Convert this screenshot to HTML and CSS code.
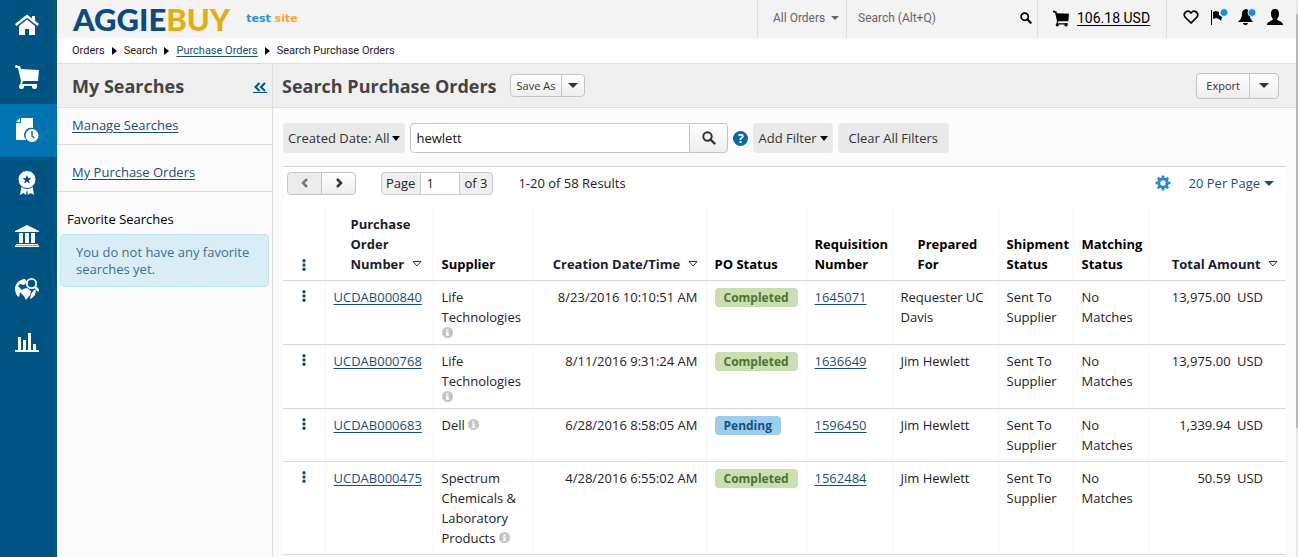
FILE: index.html
```
<!DOCTYPE html>
<html lang="en">
<head>
  <meta charset="UTF-8" />
  <meta name="viewport" content="width=device-width, initial-scale=1" />
  <title>Search Purchase Orders</title>
  <link rel="stylesheet" href="styles.css">
</head>
<body>

<svg class="defs" width="0" height="0" aria-hidden="true">
  <symbol id="cart" viewBox="0 0 24 24">
    <circle cx="1.500" cy="1.500" r="1.500"/>
    <path d="M1 1h4l1 3 18 1-1 11H8l-1 3h15v2H5l1-5L3 3H1z"/>
    <circle cx="6.500" cy="21.500" r="2.500"/><circle cx="19.500" cy="21.500" r="2.500"/>
  </symbol>
  <symbol id="lens" viewBox="0 0 14 14">
    <circle cx="5.500" cy="5.500" r="4.200" fill="none" stroke="currentColor" stroke-width="2"/>
    <path d="M8.500 8.500l4 4" stroke="currentColor" stroke-width="2.400" stroke-linecap="round"/>
  </symbol>
  <symbol id="dots" viewBox="0 0 4 12">
    <circle cx="2" cy="1.700" r="1.700"/><circle cx="2" cy="6" r="1.700"/><circle cx="2" cy="10.300" r="1.700"/>
  </symbol>
  <symbol id="info" viewBox="0 0 10 10">
    <circle cx="5" cy="5" r="5"/>
    <path d="M4 2h2v1.400H4zM3.500 4.200H6V7h.7v1H3.400V7H4V5.200h-.5z" fill="#fff"/>
  </symbol>
  <symbol id="sort" viewBox="0 0 10 6">
    <path d="M1 .5h8L5 5z" fill="#fff" stroke="#333"/>
  </symbol>
</svg>

<nav class="rail" aria-label="Main">
  <a href="#" title="Home">
    <svg viewBox="0 0 24 24"><path d="M12 1.500L0 11l1.500 2L12 4.800 22.500 13l1.500-2-4-3.200V3h-3v2.400z"/><path d="M12 6.500L4 13v9h6v-6h4v6h6v-9z"/></svg>
  </a>
  <a href="#" title="Shop"><svg viewBox="0 0 24 24"><use href="#cart"/></svg></a>
  <a href="#" title="Orders" class="active">
    <svg viewBox="0 0 24 24"><path d="M6 0h12v10a7 7 0 0 0-6.500 12H1V5h5z"/><path d="M5 0v4H1z"/><circle cx="17" cy="17.500" r="6.500"/><path d="M17 13v5l2.500 2" fill="none" stroke="#0073b1" stroke-width="1.500"/></svg>
  </a>
  <a href="#" title="Contracts">
    <svg viewBox="0 0 24 24"><path d="M6.500 15L5 24l3.500-2L11 24l1-6 1 6 2.500-2L19 24l-1.500-9z"/><circle cx="12" cy="8.500" r="9" stroke="#005482"/><path d="M12 4l1.200 3.100 3.300.2-2.600 2 .9 3.200L12 10.700l-2.800 1.800.9-3.200-2.600-2 3.300-.2z" fill="#005482"/></svg>
  </a>
  <a href="#" title="Accounts">
    <svg viewBox="0 0 24 24"><path d="M12 1L0 7v1h24V7zM1 20h22v1H1zM0 21.500h24V23H0zM4 9h4v10H4zM10 9h4v10h-4zM16 9h4v10h-4z"/></svg>
  </a>
  <a href="#" title="Sourcing">
    <svg viewBox="0 0 24 24"><path d="M9 2C4 3 0 7 0 12c0 4 2 7 4 8l1-4 3-2-3-3-2-2 2-2 4 1 3-3-2-3z"/><path d="M8 12l4-1 4 3-1 4-4 5-2-4-3-3z"/><path d="M19 13h2l-1 5-3 3-2 1 1-5z"/><circle cx="16.500" cy="6.500" r="4.700" fill="#005482" stroke="#fff" stroke-width="1.800"/><path d="M20 10l4 4" stroke="#fff" stroke-width="2.500"/></svg>
  </a>
  <a href="#" title="Reporting">
    <svg viewBox="0 0 24 24"><path d="M0 20h24v2H0zM3 7h3v13H3zM8 10h3v10H8zM13 3h3v17h-3zM18 14h3v6h-3z"/></svg>
  </a>
</nav>

<div class="page">
  <header class="topbar">
    <a href="#" class="logo">AGGIE<span>BUY</span></a>
    <p class="site-tag">test <span>site</span></p>
    <div class="quick-search">
      <button type="button" class="scope">All Orders <i class="caret"></i></button>
      <div class="quick-input">
        <input type="text" placeholder="Search (Alt+Q)" aria-label="Search (Alt+Q)" />
        <button type="button" class="plain" title="Search"><svg width="12" height="12"><use href="#lens"/></svg></button>
      </div>
      <a href="#" class="cart-total"><svg width="16" height="17"><use href="#cart"/></svg><span>106.18 USD</span></a>
      <div class="user-icons">
        <button type="button" class="plain" title="Bookmarks"><svg width="16" height="16" viewBox="0 0 16 16"><path d="M8 14L2 8C-.5 4 4.500 0 8 4c3.500-4 8.500 0 6 4z" fill="none" stroke="#000" stroke-width="1.700"/></svg></button>
        <button type="button" class="plain" title="Action items"><svg width="18" height="18" viewBox="0 0 18 18"><path d="M1 2h1v15H1zM3 4l3-1 3 1 0 3 3 2-1 4-2-2-3-1-3 1z"/><circle cx="14" cy="4.500" r="4" fill="#0f93da" stroke="#f3f3f3"/></svg></button>
        <button type="button" class="plain" title="Notifications"><svg width="18" height="18" viewBox="0 0 18 18"><path d="M8 1c4 1 5 3 4 8 0 2 2 3 3 5H0c2-2 4-4 4-8 0-3 1-4 4-5zM5 15h5c-1 3-4 3-5 0z"/><circle cx="14" cy="4.500" r="4" fill="#0f93da" stroke="#f3f3f3"/></svg></button>
        <button type="button" class="plain" title="Profile"><svg width="16" height="18" viewBox="0 0 16 18"><path d="M8 1c3 0 4 2 4 5 0 2-1 4-2 5 0 2 6 2 6 6H0c0-4 6-4 6-6-1-1-2-3-2-5 0-3 1-5 4-5z"/></svg></button>
      </div>
    </div>
  </header>

  <nav class="breadcrumb" aria-label="Breadcrumb">
    <span>Orders</span><i></i><span>Search</span><i></i><a href="#">Purchase Orders</a><i></i><span>Search Purchase Orders</span>
  </nav>

  <div class="columns">
    <aside class="sidebar">
      <div class="title-bar">
        <h2>My Searches</h2>
        <a href="#" class="collapse" title="Collapse"><svg width="12" height="10" viewBox="0 0 12 10"><path d="M5.500 1l-4 4 4 4M11 1L7 5l4 4" fill="none" stroke="#00548a" stroke-width="2"/></svg></a>
      </div>
      <div class="side-link first"><a href="#">Manage Searches</a></div>
      <div class="side-link"><a href="#">My Purchase Orders</a></div>
      <h3>Favorite Searches</h3>
      <p class="notice">You do not have any favorite searches yet.</p>
    </aside>

    <main>
      <div class="title-bar">
        <h1>Search Purchase Orders</h1>
        <div class="split small"><button type="button">Save As</button><button type="button" title="More save options"><i class="caret"></i></button></div>
        <div class="split export"><button type="button">Export</button><button type="button" title="More export options"><i class="caret"></i></button></div>
      </div>

      <div class="filters">
        <button type="button" class="filter">Created Date: All <i class="caret"></i></button>
        <div class="keyword">
          <input type="text" value="hewlett" aria-label="Keyword" />
          <button type="button" title="Search"><svg width="14" height="14"><use href="#lens"/></svg></button>
        </div>
        <button type="button" class="help" title="Help">?</button>
        <button type="button" class="filter">Add Filter <i class="caret"></i></button>
        <button type="button" class="filter clear">Clear All Filters</button>
      </div>

      <section class="results">
        <div class="pager">
          <div class="split arrows">
            <button type="button" title="Previous page" disabled><svg width="8" height="10" viewBox="0 0 8 10"><path d="M6 1L2 5l4 4" fill="none" stroke="currentColor" stroke-width="2.500"/></svg></button>
            <button type="button" title="Next page"><svg width="8" height="10" viewBox="0 0 8 10"><path d="M2 1l4 4-4 4" fill="none" stroke="currentColor" stroke-width="2.500"/></svg></button>
          </div>
          <div class="page-box">
            <label for="page-number">Page</label><input type="text" id="page-number" value="1" /><span>of 3</span>
          </div>
          <span>1-20 of 58 Results</span>
          <button type="button" class="plain gear" title="Configure columns"><svg width="16" height="16" viewBox="-8 -8 16 16"><circle r="4.200" fill="none" stroke="currentColor" stroke-width="3"/><path d="M0-7.500v3M0 7.500v-3M-7.500 0h3M7.500 0h-3M-5.300-5.300l2 2M5.300 5.300l-2-2M-5.300 5.300l2-2M5.300-5.300l-2 2" stroke="currentColor" stroke-width="2.500"/></svg></button>
          <button type="button" class="plain per-page">20 Per Page <i class="caret"></i></button>
        </div>

        <table>
          <colgroup>
            <col class="c-menu"><col class="c-po"><col class="c-supplier"><col class="c-date"><col class="c-status">
            <col class="c-req"><col class="c-for"><col class="c-ship"><col class="c-match"><col class="c-total">
          </colgroup>
          <thead>
            <tr>
              <th class="menu"><button type="button" class="plain" title="Actions"><svg width="4" height="12"><use href="#dots"/></svg></button></th>
              <th class="indent sortable">Purchase Order Number <svg class="sort"><use href="#sort"/></svg></th>
              <th>Supplier</th>
              <th class="num sortable">Creation Date/Time <svg class="sort"><use href="#sort"/></svg></th>
              <th>PO Status</th>
              <th>Requisition Number</th>
              <th class="indent">Prepared For</th>
              <th>Shipment Status</th>
              <th>Matching Status</th>
              <th class="num sortable">Total Amount <svg class="sort"><use href="#sort"/></svg></th>
            </tr>
          </thead>
          <tbody>
            <tr>
              <td class="menu"><button type="button" class="plain" title="Actions"><svg width="4" height="12"><use href="#dots"/></svg></button></td>
              <td><a href="#">UCDAB000840</a></td>
              <td>Life Technologies <svg class="info below"><use href="#info"/></svg></td>
              <td class="num">8/23/2016 10:10:51 AM</td>
              <td><span class="badge done">Completed</span></td>
              <td><a href="#">1645071</a></td>
              <td>Requester UC Davis</td>
              <td>Sent To Supplier</td>
              <td>No Matches</td>
              <td class="num total">13,975.00 <span>USD</span></td>
            </tr>
            <tr>
              <td class="menu"><button type="button" class="plain" title="Actions"><svg width="4" height="12"><use href="#dots"/></svg></button></td>
              <td><a href="#">UCDAB000768</a></td>
              <td>Life Technologies <svg class="info below"><use href="#info"/></svg></td>
              <td class="num">8/11/2016 9:31:24 AM</td>
              <td><span class="badge done">Completed</span></td>
              <td><a href="#">1636649</a></td>
              <td>Jim Hewlett</td>
              <td>Sent To Supplier</td>
              <td>No Matches</td>
              <td class="num total">13,975.00 <span>USD</span></td>
            </tr>
            <tr>
              <td class="menu"><button type="button" class="plain" title="Actions"><svg width="4" height="12"><use href="#dots"/></svg></button></td>
              <td><a href="#">UCDAB000683</a></td>
              <td>Dell <svg class="info"><use href="#info"/></svg></td>
              <td class="num">6/28/2016 8:58:05 AM</td>
              <td><span class="badge pending">Pending</span></td>
              <td><a href="#">1596450</a></td>
              <td>Jim Hewlett</td>
              <td>Sent To Supplier</td>
              <td>No Matches</td>
              <td class="num total">1,339.94 <span>USD</span></td>
            </tr>
            <tr>
              <td class="menu"><button type="button" class="plain" title="Actions"><svg width="4" height="12"><use href="#dots"/></svg></button></td>
              <td><a href="#">UCDAB000475</a></td>
              <td>Spectrum Chemicals &amp; Laboratory Products <svg class="info"><use href="#info"/></svg></td>
              <td class="num">4/28/2016 6:55:02 AM</td>
              <td><span class="badge done">Completed</span></td>
              <td><a href="#">1562484</a></td>
              <td>Jim Hewlett</td>
              <td>Sent To Supplier</td>
              <td>No Matches</td>
              <td class="num total">50.59 <span>USD</span></td>
            </tr>
          </tbody>
        </table>
      </section>
    </main>
  </div>
</div>

<div class="scroll-thumb"></div>

</body>
</html>
```
FILE: styles.css
```
* {
  box-sizing: border-box;
}
body {
  margin: 0;
  display: flex;
  min-height: 100vh;
  font: 13px/20px "Open Sans", "Noto Sans", sans-serif;
  color: #222;
  background-color: #fbfbfb;
}
h1, h2, h3, p {
  margin: 0;
}
a {
  color: #1b4f72;
  text-decoration: underline;
  text-underline-offset: 2px;
}
button, input {
  font: inherit;
  color: inherit;
  margin: 0;
}
button {
  cursor: pointer;
}
svg {
  fill: currentColor;
  flex: none;
}
.defs {
  position: absolute;
}
.plain {
  display: flex;
  align-items: center;
  padding: 0;
  border: 0;
  background: none;
}
.caret {
  display: inline-block;
  flex: none;
  border: 5px solid transparent;
  border-top-color: currentColor;
  border-bottom-width: 0;
}

/* left icon rail */
.rail {
  flex: 0 0 57px;
  background-color: #005482;
}
.rail a {
  display: flex;
  align-items: center;
  justify-content: center;
  height: 53px;
  padding: 0 3px 2px 0;
  color: #fff;
}
.rail a:first-child {
  height: 51px;
}
.rail a.active {
  background-color: #0073b1;
}
.rail svg {
  width: 24px;
  height: 24px;
}

.page {
  flex: 1;
  min-width: 0;
  display: flex;
  flex-direction: column;
}

/* top bar */
.topbar {
  display: flex;
  align-items: center;
  height: 38px;
  padding-left: 16px;
  background-color: #f3f3f3;
  font-family: Roboto, sans-serif;
}
.logo {
  font: 900 31px/36px Lato, sans-serif;
  color: #0b4a82;
  text-decoration: none;
}
.logo span {
  color: #e0b010;
}
.site-tag {
  margin-left: 16px;
  font: bold 11px/38px "DejaVu Sans", sans-serif;
  color: #1f95d8;
}
.site-tag span {
  color: #f5a623;
}
.quick-search {
  display: flex;
  align-self: stretch;
  margin-left: auto;
  color: #666;
  font-size: 12px;
}
.quick-search > * {
  display: flex;
  align-items: center;
  border: 0;
  border-left: 1px solid #ddd;
  padding-bottom: 2px;
}
.scope {
  width: 89px;
  padding: 0 0 2px 15px;
  gap: 6px;
  background: none;
}
.scope .caret {
  border-width: 4px 4px 0;
}
.quick-input {
  width: 191px;
  padding-left: 11px;
  padding-right: 5px;
  color: #000;
}
.quick-input input {
  flex: 1;
  min-width: 0;
  padding: 0;
  border: 0;
  background: none;
}
.quick-input input::placeholder {
  color: #666;
  opacity: 1;
}
.cart-total {
  width: 129px;
  padding-left: 15px;
  gap: 8px;
  color: #000;
  font-size: 14px;
}
.user-icons {
  width: 132px;
  padding: 0 15px 4px 16px;
  justify-content: space-between;
  color: #000;
}

.breadcrumb {
  display: flex;
  align-items: center;
  height: 25px;
  padding-left: 15px;
  background-color: #fff;
  font: 11px/16px Roboto, sans-serif;
}
.breadcrumb i {
  margin: 0 7px;
  border: 4px solid transparent;
  border-left: 5px solid #000;
  border-right: 0;
}

/* two columns under the breadcrumb */
.columns {
  flex: 1;
  display: flex;
}
.title-bar {
  display: flex;
  align-items: center;
  height: 45px;
  background-color: #efefef;
  border: 1px solid #ddd;
  border-width: 1px 0;
}
h1, h2 {
  font-size: 18px;
  line-height: 24px;
  color: #444;
}
.sidebar {
  flex: 0 0 216px;
  border-right: 1px solid #ddd;
}
.sidebar .title-bar {
  padding: 0 5px 0 15px;
}
.collapse {
  margin-left: auto;
  padding: 4px 1px 0;
  border-bottom: 1px solid #00548a;
  line-height: 10px;
}
.side-link {
  padding: 17px 15px 9px;
  border-bottom: 1px solid #ddd;
}
.side-link.first {
  padding-top: 7px;
}
h3 {
  margin: 17px 0 5px 10px;
  font-size: 13px;
  line-height: 20px;
  font-weight: normal;
  color: #000;
}
.notice {
  margin: 0 3px;
  padding: 9px 15px 8px;
  border: 1px solid #bce8f1;
  border-radius: 4px;
  background-color: #d9edf7;
  color: #3a7090;
  line-height: 17px;
}

main {
  flex: 1;
  min-width: 0;
}
main .title-bar {
  padding: 0 19px 0 9px;
}
.split {
  display: flex;
}
.split button {
  display: flex;
  align-items: center;
  justify-content: center;
  padding: 0 9px;
  height: 26px;
  border: 1px solid #c4c4c4;
  background: linear-gradient(#fff, #ededed);
  font-size: 11px;
  color: #333;
}
.split button:first-child {
  border-radius: 4px 0 0 4px;
}
.split button:last-child {
  border-radius: 0 4px 4px 0;
  margin-left: -1px;
}
.small {
  margin-left: 13px;
}
.small button {
  height: 23px;
  padding: 0 6px;
}
.export {
  margin-left: auto;
}

.filters {
  display: flex;
  align-items: center;
  padding: 15px 10px 13px;
  color: #333;
}
.filter {
  display: flex;
  align-items: center;
  gap: 3px;
  height: 30px;
  padding: 0 5px;
  border: 0;
  border-radius: 4px;
  background-color: #e9e9e9;
}
.filter .caret {
  border-width: 5px 4px 0;
  color: #000;
}
.clear {
  margin-left: 5px;
  padding: 0 11px;
}
.keyword {
  display: flex;
  flex: 0 1 318px;
  height: 30px;
  margin-left: 5px;
}
.keyword input {
  flex: 1;
  min-width: 0;
  padding: 0 5px;
  border: 1px solid #c4c4c4;
  border-radius: 4px 0 0 4px;
  background-color: #fff;
  color: #111;
}
.keyword button {
  display: flex;
  align-items: center;
  justify-content: center;
  width: 39px;
  margin-left: -1px;
  padding: 0;
  border: 1px solid #c4c4c4;
  border-radius: 0 4px 4px 0;
  background: linear-gradient(#fff, #ededed);
}
.help {
  width: 15px;
  height: 15px;
  margin: 0 5px;
  padding: 0;
  border: 0;
  border-radius: 50%;
  background-color: #0b69a8;
  color: #fff;
  font-weight: bold;
  font-size: 12px;
  line-height: 15px;
}

/* results */
.results {
  margin: 0 12px 0 10px;
  border-top: 1px solid #d5d5d5;
  background-color: #fff;
}
.pager {
  display: flex;
  align-items: center;
  height: 41px;
  padding: 0 12px 9px 4px;
}
.arrows button {
  width: 35px;
  height: 23px;
}
.arrows button:disabled {
  background: #ececec;
  color: #777;
  cursor: default;
}
.page-box {
  display: flex;
  height: 23px;
  margin: 0 25px;
  border: 1px solid #c8c8c8;
  border-radius: 4px;
  background-color: #f0f0f0;
  line-height: 21px;
}
.page-box label, .page-box span {
  padding: 0 5px 0 4px;
}
.page-box input {
  width: 40px;
  padding: 0 5px;
  border: 1px solid #c8c8c8;
  border-width: 0 1px;
  background-color: #fff;
}
.gear {
  margin-left: auto;
  color: #2a88c4;
}
.per-page {
  margin-left: 18px;
  gap: 4px;
  color: #1b4f72;
}

table {
  width: 100%;
  table-layout: fixed;
  border-collapse: collapse;
}
.c-menu { width: 42px; }
.c-po { width: 108px; }
.c-supplier { width: 99px; }
.c-date { width: 174px; }
.c-status { width: 100px; }
.c-req { width: 86px; }
.c-for { width: 106px; }
.c-ship { width: 75px; }
.c-match { width: 75px; }
.c-total { width: 138px; }
th, td {
  padding: 6px 8px;
  border-right: 1px solid #f6f6f6;
  border-bottom: 1px solid #d8d8d8;
  text-align: left;
  vertical-align: top;
}
th {
  vertical-align: bottom;
  color: #000;
}
th:last-child, td:last-child {
  border-right: 0;
}
th.sortable {
  color: #1c1c2c;
}
th.indent {
  padding-left: 25px;
}
.num {
  text-align: right;
  white-space: nowrap;
}
td.total {
  padding-right: 23px;
}
.total span {
  margin-left: 3px;
}
.menu .plain {
  margin: 0 auto;
  color: #1b4f72;
}
.menu svg {
  margin: 3px 0;
}
.sort {
  width: 10px;
  height: 6px;
  margin-left: 4px;
  vertical-align: 2px;
}
.info {
  width: 11px;
  height: 11px;
  color: #c4c4c4;
}
.info.below {
  display: block;
}
.badge {
  display: inline-block;
  padding: 0 9px;
  border-radius: 4px;
  font-size: 12px;
  font-weight: bold;
  line-height: 19px;
}
.done {
  background-color: #c9dfb2;
  color: #4b752c;
}
.pending {
  background-color: #9dcdee;
  color: #12507f;
}

.scroll-thumb {
  position: fixed;
  top: 0;
  bottom: 0;
  right: 0;
  width: 2px;
  background: linear-gradient(#e6e6e6 14px, #b8b8b8 14px, #b8b8b8 428px, #e6e6e6 428px);
}
```
